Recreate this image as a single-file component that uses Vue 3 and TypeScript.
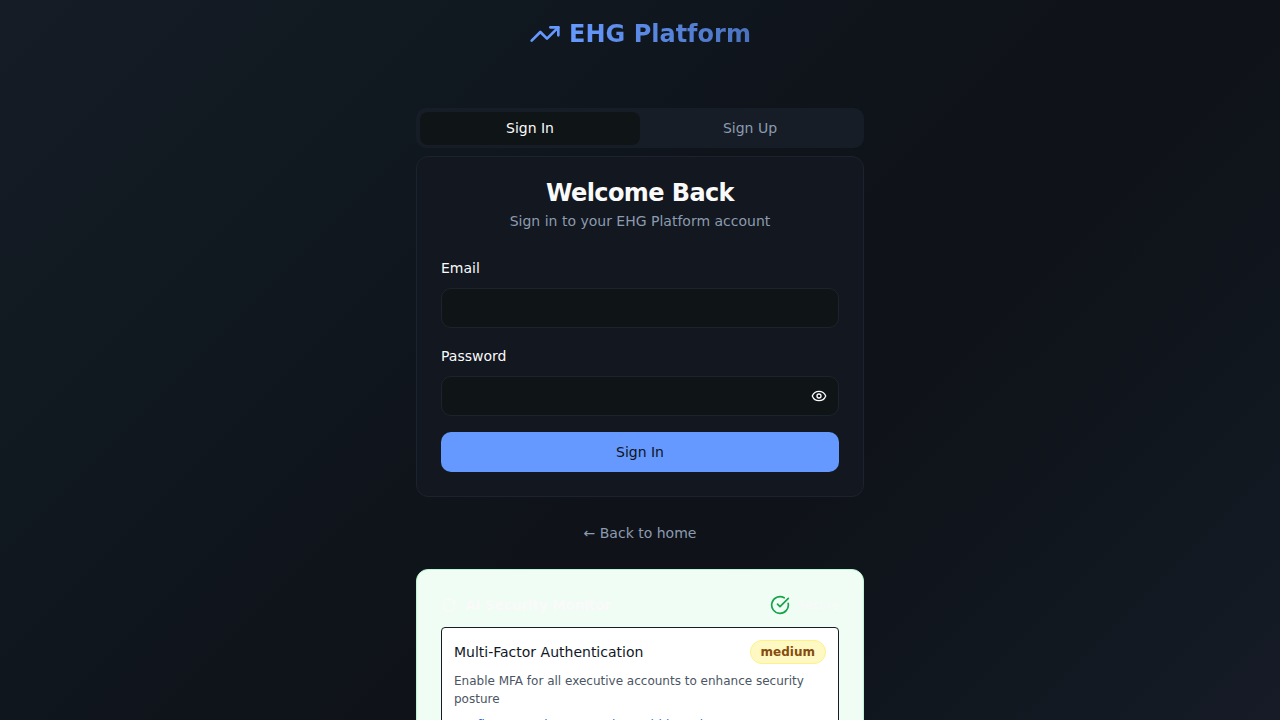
<script setup lang="ts">
import { ref } from 'vue'

const tab = ref<'in' | 'up'>('in')
const email = ref('')
const password = ref('')
const showPassword = ref(false)
</script>

<template>
  <div class="page">
    <header class="header">
      <a class="brand" href="/">
        <svg class="brand-icon" viewBox="0 0 24 24" aria-hidden="true">
          <polyline points="22 7 13.5 15.5 8.5 10.5 2 17" />
          <polyline points="16 7 22 7 22 13" />
        </svg>
        <span class="brand-name">EHG Platform</span>
      </a>
    </header>

    <main class="content">
      <div class="tabs" role="tablist">
        <button class="tab" :class="{ active: tab === 'in' }" type="button" role="tab" :aria-selected="tab === 'in'" @click="tab = 'in'">Sign In</button>
        <button class="tab" :class="{ active: tab === 'up' }" type="button" role="tab" :aria-selected="tab === 'up'" @click="tab = 'up'">Sign Up</button>
      </div>

      <section class="card">
        <h1>Welcome Back</h1>
        <p class="subtitle">Sign in to your EHG Platform account</p>
        <form class="form" @submit.prevent>
          <div class="field">
            <label for="email">Email</label>
            <input id="email" v-model="email" type="email" autocomplete="email" />
          </div>
          <div class="field">
            <label for="password">Password</label>
            <div class="password">
              <input id="password" v-model="password" :type="showPassword ? 'text' : 'password'" />
              <button class="eye" type="button" aria-label="Show password" @click="showPassword = !showPassword">
                <svg viewBox="0 0 24 24" aria-hidden="true">
                  <path d="M2.062 12.348a1 1 0 0 1 0-.696 10.75 10.75 0 0 1 19.876 0 1 1 0 0 1 0 .696 10.75 10.75 0 0 1-19.876 0" />
                  <circle cx="12" cy="12" r="3" />
                </svg>
              </button>
            </div>
          </div>
          <button class="submit" type="submit">Sign In</button>
        </form>
      </section>

      <a class="back" href="/">← Back to home</a>

      <section class="monitor">
        <div class="monitor-head">
          <h2>
            <svg class="shield" viewBox="0 0 24 24" aria-hidden="true">
              <path d="M20 13c0 5-3.5 7.5-7.66 8.95a1 1 0 0 1-.67-.01C7.5 20.5 4 18 4 13V6a1 1 0 0 1 1-1c2 0 4.5-1.2 6.24-2.72a1.17 1.17 0 0 1 1.52 0C14.51 3.81 17 5 19 5a1 1 0 0 1 1 1z" />
            </svg>
            AI Security Monitor
          </h2>
          <div class="status">
            <svg class="check" viewBox="0 0 24 24" aria-hidden="true">
              <path d="M21.801 10A10 10 0 1 1 17 3.335" />
              <path d="m9 11 3 3L22 4" />
            </svg>
            <span>Secure</span>
          </div>
        </div>
        <article class="notice">
          <div class="notice-head">
            <h3>Multi-Factor Authentication</h3>
            <span class="badge">medium</span>
          </div>
          <p>Enable MFA for all executive accounts to enhance security posture</p>
          <p class="action">Configure MFA in user settings within 24 hours</p>
        </article>
      </section>
    </main>
  </div>
</template>

<style>
html {
  background: #0f1419;
}
body {
  overflow: hidden;
}
</style>

<style scoped>
* {
  box-sizing: border-box;
}
.page {
  height: 100vh;
  overflow: hidden;
  background: linear-gradient(135deg, #151c25, #101820 25%, #0f1219 55%, #0f1219 65%, #111820 85%, #161b27);
  color: #fafafa;
  font-family: "DejaVu Sans", sans-serif;
  font-size: 14px;
  line-height: 20px;
}
h1, h2, h3, p {
  margin: 0;
}
button, input {
  font: inherit;
}
svg {
  fill: none;
  stroke: currentColor;
  stroke-width: 2;
  stroke-linecap: round;
  stroke-linejoin: round;
  flex: none;
}
.header {
  display: flex;
  justify-content: center;
  padding: 16px;
}
.brand {
  display: flex;
  align-items: center;
  gap: 8px;
  color: #6699ff;
  text-decoration: none;
}
.brand-icon {
  width: 32px;
  height: 32px;
}
.brand-name {
  font-size: 24px;
  line-height: 36px;
  font-weight: 700;
  color: transparent;
  background: linear-gradient(to right, #6699ff, #4a72bd);
  background-clip: text;
  -webkit-background-clip: text;
}
.content {
  max-width: 448px;
  margin: 40px auto 0;
  display: flex;
  flex-direction: column;
}
.tabs {
  display: grid;
  grid-template-columns: 1fr 1fr;
  height: 40px;
  padding: 4px 4px 3px;
  border-radius: 10px;
  background: #171d26;
}
.tab {
  border: 0;
  border-radius: 8px;
  background: transparent;
  color: #8b9bb0;
  padding: 0 12px 2px;
}
.tab.active {
  background: #0f1417;
  color: #fafafa;
}
.card {
  margin-top: 8px;
  padding: 20px 24px 24px;
  border: 1px solid #1c232e;
  border-radius: 12px;
  background: #13171f;
}
h1 {
  font-size: 24px;
  line-height: 32px;
  letter-spacing: -0.6px;
  text-align: center;
}
.subtitle {
  margin-top: 2px;
  text-align: center;
  color: #8b9bb0;
}
.form {
  display: grid;
  gap: 16px;
  margin-top: 25px;
}
.field {
  display: grid;
  gap: 8px;
}
.field label {
  line-height: 24px;
}
input {
  display: block;
  width: 100%;
  height: 40px;
  padding: 8px 12px;
  border: 1px solid #1c232e;
  border-radius: 10px;
  background: #0f1417;
  color: #fafafa;
}
.password {
  position: relative;
}
.eye {
  position: absolute;
  top: 0;
  right: 0;
  width: 40px;
  height: 40px;
  display: grid;
  place-items: center;
  padding: 0;
  border: 0;
  background: transparent;
  color: #fafafa;
}
.eye svg {
  width: 16px;
  height: 16px;
}
.submit {
  height: 40px;
  border: 0;
  border-radius: 10px;
  background: #6699ff;
  color: #0f1417;
}
.back {
  align-self: center;
  margin-top: 26px;
  color: #8b9bb0;
  text-decoration: none;
}
.monitor {
  margin-top: 26px;
  padding: 24px;
  border: 1px solid #bbf7d0;
  border-radius: 12px;
  background: #f0fdf4;
}
.monitor-head {
  display: flex;
  align-items: center;
  justify-content: space-between;
  height: 22px;
}
h2 {
  display: flex;
  align-items: center;
  gap: 8px;
  font-size: 14px;
  line-height: 20px;
  letter-spacing: -0.025em;
}
.shield {
  width: 16px;
  height: 16px;
}
.status {
  display: flex;
  align-items: center;
  gap: 8px;
  font-size: 12px;
}
.check {
  width: 20px;
  height: 20px;
  color: #16a34a;
}
.notice {
  margin-top: 11px;
  padding: 12px;
  border: 1px solid #171d26;
  border-radius: 4px;
  background: #fff;
}
.notice-head {
  display: flex;
  align-items: center;
  justify-content: space-between;
  margin-bottom: 8px;
}
h3 {
  font-size: 14px;
  font-weight: 400;
  color: #111827;
}
.badge {
  padding: 2px 10px;
  border: 1px solid #fef08a;
  border-radius: 12px;
  background: #fef9c3;
  color: #854d0e;
  font-size: 12px;
  line-height: 18px;
  font-weight: 700;
}
.notice p {
  font-size: 12px;
  line-height: 18px;
  color: #4b5563;
}
.notice .action {
  margin-top: 8px;
  color: #2563eb;
}
</style>
